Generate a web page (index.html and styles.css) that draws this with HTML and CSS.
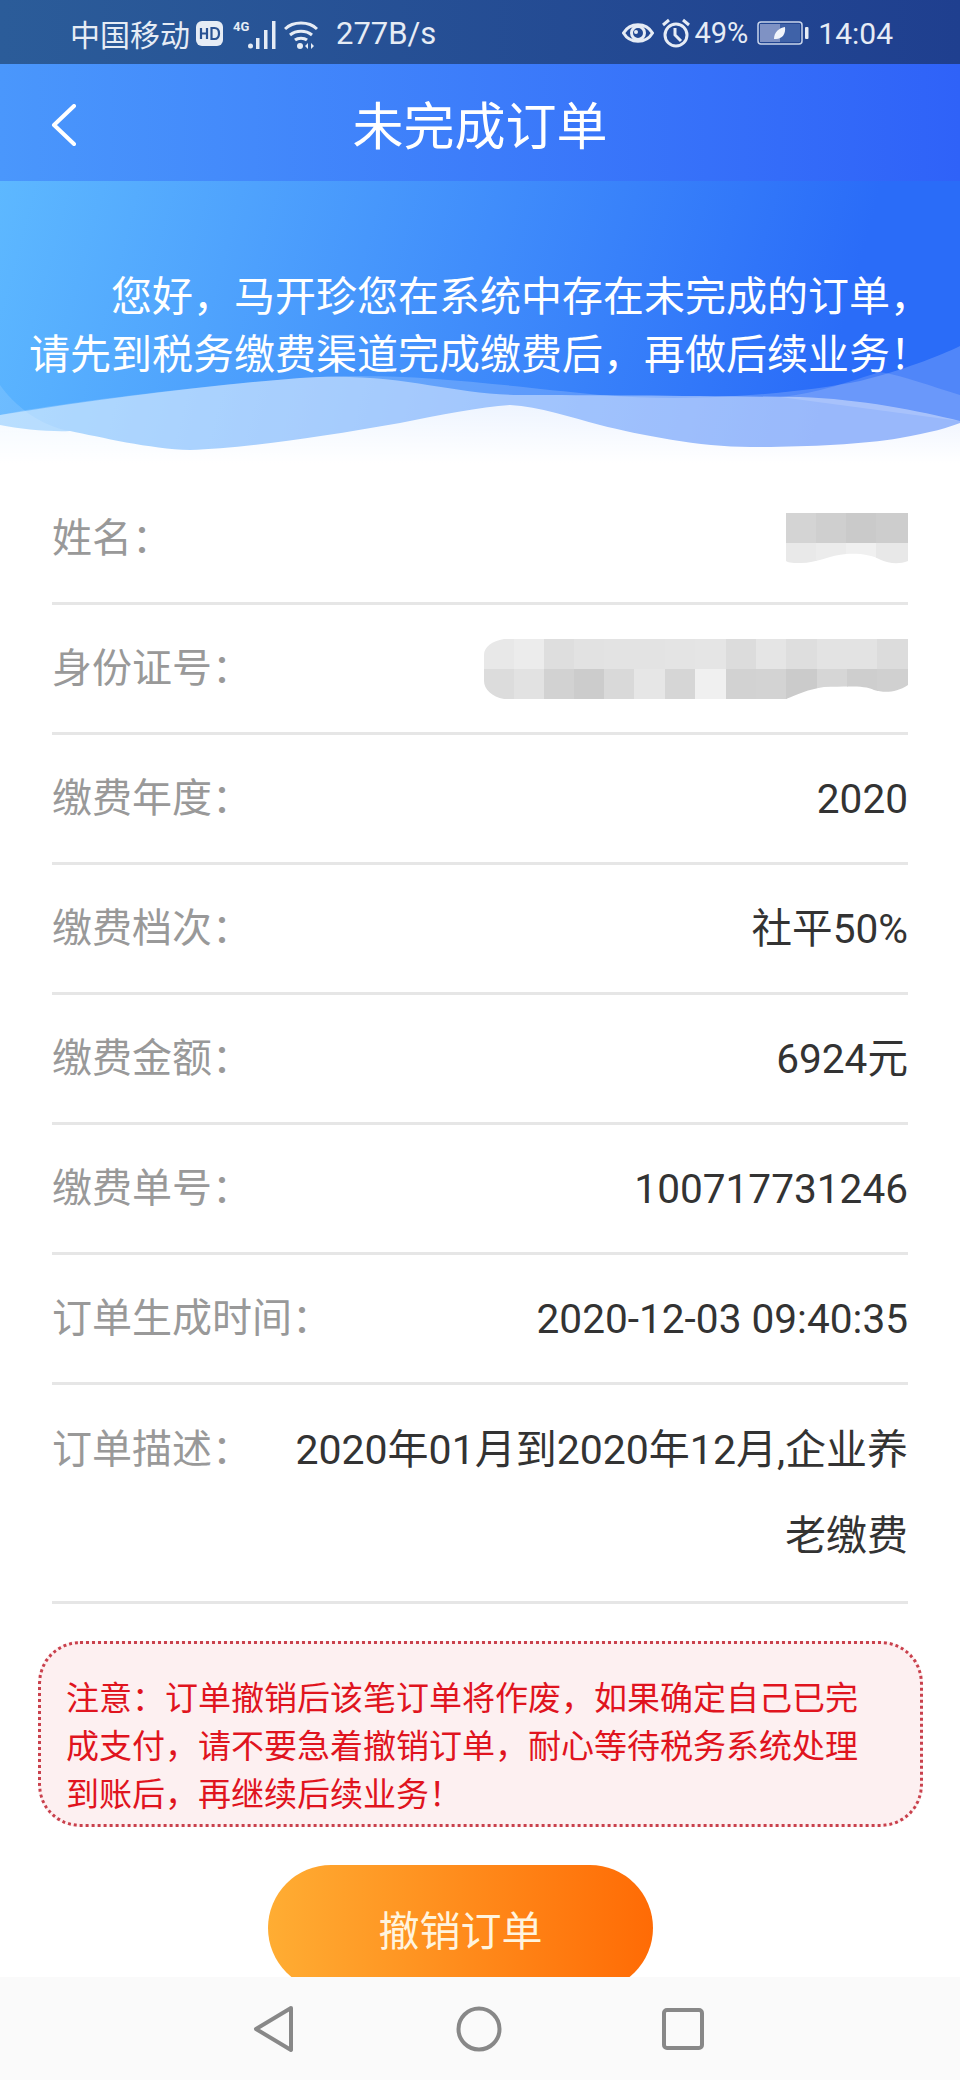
FILE: index.html
```html
<!DOCTYPE html>
<html lang="zh-CN">
<head>
    <meta charset="UTF-8">
    <meta name="viewport" content="width=device-width, initial-scale=1.0">
    <title>未完成订单</title>
    <link rel="stylesheet" href="styles.css">
</head>
<body>

<div class="screen">
    <!-- Phone status bar -->
    <div class="status-bar">
        <div class="status-left">
            <span class="carrier">中国移动</span>
            <svg class="icon-hd" width="27" height="25" viewBox="0 0 27 25">
                <rect width="27" height="25" rx="6" fill="#e6ecf5"/>
                <path d="M5 7v11M5 12.500h6M11 7v11M15.500 7v11h3c3 0 4.500-2.200 4.500-5.500S21.500 7 18.500 7z" fill="none" stroke="#2a5293" stroke-width="2.200"/>
            </svg>
            <span class="net-type">4G</span>
            <svg class="icon-signal" width="28" height="28" viewBox="0 0 28 28">
                <circle cx="2.500" cy="25" r="2.500" fill="#e6ecf5"/>
                <rect x="8" y="17" width="3.500" height="11" fill="#e6ecf5"/>
                <rect x="16" y="9" width="3.500" height="19" fill="#e6ecf5"/>
                <rect x="24" y="0" width="3.500" height="28" fill="#e6ecf5"/>
            </svg>
            <svg class="icon-wifi" width="34" height="28" viewBox="0 0 34 28">
                <path d="M1 8C9 0 25 0 33 8M6 14c6-5 16-5 22 0M11 19c3-2.500 9-2.500 12 0" fill="none" stroke="#e6ecf5" stroke-width="3"/>
                <circle cx="16" cy="25" r="3" fill="#e6ecf5"/>
                <path d="M24 22l-3 3 3 3zM27 22l3 3-3 3z" fill="#e6ecf5"/>
            </svg>
            <span class="speed">277B/s</span>
        </div>
        <div class="status-right">
            <svg class="icon-eye" width="32" height="24" viewBox="0 0 32 24">
                <path d="M1.500 12C8 1 24 1 30.500 12 24 23 8 23 1.500 12z" fill="none" stroke="#e6ecf5" stroke-width="3"/>
                <circle cx="16" cy="12" r="6.500" fill="none" stroke="#e6ecf5" stroke-width="3"/>
                <circle cx="14" cy="11" r="2" fill="#e6ecf5"/>
            </svg>
            <svg class="icon-alarm" width="30" height="30" viewBox="0 0 30 30">
                <circle cx="15" cy="17" r="11" fill="none" stroke="#e6ecf5" stroke-width="3"/>
                <path d="M14 10v7l6 6M2 7l6-5M28 7l-6-5" fill="none" stroke="#e6ecf5" stroke-width="3"/>
            </svg>
            <span class="battery-text">49%</span>
            <svg class="icon-battery" width="52" height="24" viewBox="0 0 52 24">
                <rect x="1" y="1" width="44" height="22" rx="3" fill="none" stroke="#c8d4ea" stroke-width="1.500"/>
                <rect x="3" y="3" width="20" height="18" fill="#7f92c4"/>
                <rect x="23" y="3" width="20" height="18" fill="#3f62a8"/>
                <path d="M17 18c0-7 5-11 11-12 1 7-3 12-9 12z" fill="#f2f5fb"/>
                <rect x="48" y="6" width="3.500" height="12" rx="1" fill="#e6ecf5"/>
            </svg>
            <span class="clock">14:04</span>
        </div>
    </div>

    <div class="nav-bar">
        <svg class="back-icon" width="26" height="42" viewBox="0 0 26 42">
            <path d="M23 2L3 21l20 19" fill="none" stroke="#fff" stroke-width="4" stroke-linecap="round" stroke-linejoin="round"/>
        </svg>
        <h1>未完成订单</h1>
    </div>

    <!-- Banner with the wave decoration -->
    <div class="banner">
        <svg class="waves" width="960" height="294" viewBox="0 0 960 294">
            <defs>
                <linearGradient id="fadeWhite" gradientUnits="userSpaceOnUse" x1="0" y1="224" x2="0" y2="282">
                    <stop offset="0" stop-color="#fff" stop-opacity="0.82"/>
                    <stop offset="0.6" stop-color="#fff" stop-opacity="0.93"/>
                    <stop offset="1" stop-color="#fff"/>
                </linearGradient>
            </defs>
            <path d="M0 204C14 224 40 245 70 250L0 250z" fill="#fff" opacity="0.12"/>
            <path d="M0 234C60 222 200 205 300 197C400 190 480 202 600 214C700 222 800 212 860 200C900 190 940 175 960 165V294H0z" fill="#fff" opacity="0.18"/>
            <path d="M0 234C100 218 200 205 300 197C400 190 450 214 520 214C600 214 700 215 800 216C860 218 920 230 960 240V294H0z" fill="#fff" opacity="0.42"/>
            <path d="M960 214C930 205 905 195 880 191C850 200 820 212 780 216L960 240z" fill="#fff" opacity="0.15"/>
            <path d="M0 244C20 248 50 251 70 250C100 256 150 268 190 269C240 268 320 256 400 242C440 234 480 226 510 224C540 226 570 236 600 244C640 254 700 266 750 266C800 266 860 264 900 257C930 252 950 246 960 242V294H0z" fill="url(#fadeWhite)"/>
        </svg>
        <p class="banner-text">您好&#65292;马开珍您在系统中存在未完成的订单&#65292;请先到税务缴费渠道完成缴费后&#65292;再做后续业务&#65281;</p>
    </div>

    <!-- Order details -->
    <div class="details">
        <div class="row">
            <span class="label">姓名&#65306;</span>
            <svg class="mosaic" width="122" height="51" viewBox="0 0 122 51">
                <defs>
                    <clipPath id="nameClip">
                        <path d="M0 0H122V48C112 52 102 50 95 47C85 41 70 40 60 41C45 42 30 50 15 50C8 50 3 50 0 48z"/>
                    </clipPath>
                </defs>
                <g clip-path="url(#nameClip)">
                    <rect x="0" y="0" width="31" height="30" fill="#d4d4d4"/>
                    <rect x="30" y="0" width="31" height="30" fill="#cfcfcf"/>
                    <rect x="60" y="0" width="31" height="30" fill="#cacaca"/>
                    <rect x="90" y="0" width="32" height="30" fill="#cdcdcd"/>
                    <rect x="0" y="30" width="31" height="21" fill="#e9e9e9"/>
                    <rect x="30" y="30" width="31" height="21" fill="#ececec"/>
                    <rect x="60" y="30" width="31" height="21" fill="#f0f0f0"/>
                    <rect x="90" y="30" width="32" height="21" fill="#e8e8e8"/>
                </g>
            </svg>
        </div>
        <div class="row">
            <span class="label">身份证号&#65306;</span>
            <svg class="mosaic" width="424" height="60" viewBox="0 0 424 60">
                <defs>
                    <clipPath id="idClip">
                        <path d="M20 0H424V46C412 54 400 54 390 51C380 46 360 48 340 48C325 50 312 56 302 60H20C8 58 0 50 0 42V16C0 8 8 2 20 0z"/>
                    </clipPath>
                </defs>
                <g clip-path="url(#idClip)">
                    <rect x="0" y="0" width="31" height="30" fill="#e8e8e8"/>
                    <rect x="30" y="0" width="31" height="30" fill="#ececec"/>
                    <rect x="60" y="0" width="31" height="30" fill="#dedede"/>
                    <rect x="90" y="0" width="31" height="30" fill="#e2e2e2"/>
                    <rect x="120" y="0" width="31" height="30" fill="#e3e3e3"/>
                    <rect x="150" y="0" width="31" height="30" fill="#e3e3e3"/>
                    <rect x="181" y="0" width="31" height="30" fill="#e4e4e4"/>
                    <rect x="211" y="0" width="31" height="30" fill="#e5e5e5"/>
                    <rect x="242" y="0" width="31" height="30" fill="#dcdcdc"/>
                    <rect x="272" y="0" width="31" height="30" fill="#e5e5e5"/>
                    <rect x="302" y="0" width="31" height="30" fill="#dedede"/>
                    <rect x="333" y="0" width="31" height="30" fill="#e3e3e3"/>
                    <rect x="363" y="0" width="31" height="30" fill="#e3e3e3"/>
                    <rect x="393" y="0" width="31" height="30" fill="#dcdcdc"/>
                    <rect x="0" y="30" width="31" height="30" fill="#dcdcdc"/>
                    <rect x="30" y="30" width="31" height="30" fill="#e2e2e2"/>
                    <rect x="60" y="30" width="31" height="30" fill="#d2d2d2"/>
                    <rect x="90" y="30" width="31" height="30" fill="#cccccc"/>
                    <rect x="120" y="30" width="31" height="30" fill="#d9d9d9"/>
                    <rect x="150" y="30" width="31" height="30" fill="#e6e6e6"/>
                    <rect x="181" y="30" width="31" height="30" fill="#d6d6d6"/>
                    <rect x="211" y="30" width="31" height="30" fill="#f0f0f0"/>
                    <rect x="242" y="30" width="31" height="30" fill="#d2d2d2"/>
                    <rect x="272" y="30" width="31" height="30" fill="#d3d3d3"/>
                    <rect x="302" y="30" width="31" height="30" fill="#cbcbcb"/>
                    <rect x="333" y="30" width="31" height="30" fill="#d6d6d6"/>
                    <rect x="363" y="30" width="31" height="30" fill="#cecece"/>
                    <rect x="393" y="30" width="31" height="30" fill="#d0d0d0"/>
                </g>
            </svg>
        </div>
        <div class="row">
            <span class="label">缴费年度&#65306;</span>
            <span class="value">2020</span>
        </div>
        <div class="row">
            <span class="label">缴费档次&#65306;</span>
            <span class="value">社平50%</span>
        </div>
        <div class="row">
            <span class="label">缴费金额&#65306;</span>
            <span class="value">6924元</span>
        </div>
        <div class="row">
            <span class="label">缴费单号&#65306;</span>
            <span class="value">100717731246</span>
        </div>
        <div class="row">
            <span class="label">订单生成时间&#65306;</span>
            <span class="value">2020-12-03 09:40:35</span>
        </div>
        <div class="row row-tall">
            <span class="label">订单描述&#65306;</span>
            <span class="value value-wrap">2020年01月到2020年12月,企业养老缴费</span>
        </div>
    </div>

    <div class="notice">注意&#65306;订单撤销后该笔订单将作废&#65292;如果确定自己已完成支付&#65292;请不要急着撤销订单&#65292;耐心等待税务系统处理到账后&#65292;再继续后续业务&#65281;</div>

    <button class="cancel-btn" type="button">撤销订单</button>

    <!-- Android navigation keys, over the page -->
    <div class="system-nav">
        <svg width="44" height="48" viewBox="0 0 44 48">
            <path d="M39 3L4 24l35 21z" fill="none" stroke="#888" stroke-width="4" stroke-linejoin="round"/>
        </svg>
        <svg width="46" height="48" viewBox="0 0 46 48">
            <circle cx="23" cy="24" r="20.500" fill="none" stroke="#888" stroke-width="4"/>
        </svg>
        <svg width="44" height="44" viewBox="0 0 44 44">
            <rect x="3" y="3" width="38" height="38" rx="3" fill="none" stroke="#888" stroke-width="4"/>
        </svg>
    </div>
</div>

</body>
</html>
```

FILE: styles.css
```css
* {
    box-sizing: border-box;
}
html, body {
    margin: 0;
    padding: 0;
    background-color: #fff;
}
.screen {
    position: relative;
    width: 960px;
    height: 2080px;
    overflow: hidden;
    font-family: Roboto, "Noto Sans CJK SC", sans-serif;
}
.status-bar {
    display: flex;
    justify-content: space-between;
    align-items: center;
    height: 64px;
    padding: 2px 67px 0 70px;
    color: #e6ecf5;
    background: linear-gradient(90deg, #2b5c99, #1f3f8f);
}
.status-left, .status-right {
    display: flex;
    align-items: center;
}
.carrier {
    font-size: 30px;
}
.icon-hd {
    margin-left: 6px;
}
.net-type {
    margin: -14px 0 0 10px;
    width: 15px;
    font-size: 13px;
    font-weight: 700;
}
.icon-signal {
    margin-top: 4px;
}
.icon-wifi {
    margin: 4px 0 0 8px;
}
.speed {
    margin-left: 18px;
    font-size: 31px;
}
.icon-alarm {
    margin-left: 7px;
}
.battery-text {
    margin-left: 3px;
    font-size: 29px;
}
.icon-battery {
    margin-left: 9px;
}
.clock {
    margin-left: 9px;
    font-size: 30px;
}
.nav-bar {
    position: relative;
    display: flex;
    align-items: center;
    justify-content: center;
    height: 117px;
    background: linear-gradient(90deg, #4a97fc, #2f62f8);
}
.nav-bar h1 {
    margin: 0;
    font-size: 51px;
    font-weight: 400;
    color: #fff;
}
.back-icon {
    position: absolute;
    left: 51px;
    top: 40px;
}
.banner {
    position: relative;
    height: 294px;
    background: linear-gradient(105deg, #5db8ff, #2a6cf8 85%);
}
.waves {
    position: absolute;
    left: 0;
    top: 0;
}
.banner-text {
    position: relative;
    margin: 0;
    padding: 87px 29px 0;
    font-size: 41px;
    line-height: 58px;
    text-indent: 2em;
    color: #fff;
}
.details {
    padding: 0 52px;
}
.row {
    display: flex;
    justify-content: space-between;
    align-items: center;
    height: 130px;
    border-bottom: 3px solid #e6e6e6;
}
.row-tall {
    align-items: flex-start;
    height: 219px;
    padding-top: 22px;
}
.label {
    flex-shrink: 0;
    font-size: 40px;
    line-height: 86px;
    color: #999;
}
.value {
    font-size: 40.6px;
    line-height: 86px;
    color: #333;
}
.value-wrap {
    width: 620px;
    font-size: 41px;
    text-align: right;
}
.mosaic {
    display: block;
}
.notice {
    width: 885px;
    height: 186px;
    margin: 37px 0 0 38px;
    padding: 31px 49px 0 25px;
    font-size: 33px;
    line-height: 48px;
    color: #e0141e;
    background-color: #fdf0f1;
    border: 3px dotted #c9404c;
    border-radius: 42px;
}
.cancel-btn {
    display: block;
    width: 385px;
    height: 126px;
    margin: 38px 0 0 268px;
    padding: 0;
    font-family: inherit;
    font-size: 41px;
    color: #fff4de;
    background: linear-gradient(90deg, #ffad33, #ff6b05);
    border: none;
    border-radius: 63px;
}
.system-nav {
    position: absolute;
    left: 0;
    right: 0;
    bottom: 0;
    display: flex;
    justify-content: space-between;
    align-items: center;
    height: 103px;
    padding: 0 255px 0 252px;
    background-color: #fafafa;
}
```
